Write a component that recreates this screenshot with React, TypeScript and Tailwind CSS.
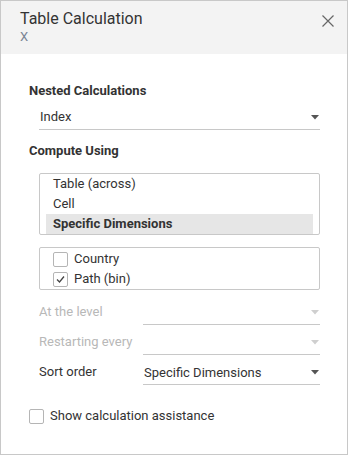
import React from 'react';

const font = "font-['Roboto','Noto_Sans',sans-serif]";

function Caret({ disabled }: { disabled?: boolean }) {
  return (
    <svg width="8" height="5" viewBox="0 0 8 5" className="mr-[1px]">
      <path d="M0 0 L8 0 L4 4.5 Z" fill={disabled ? '#cfcfcf' : '#555'} />
    </svg>
  );
}

function CheckBox({ checked }: { checked?: boolean }) {
  return (
    <span className="w-[15px] h-[15px] border border-[#b5b5b5] rounded-[2px] bg-white flex items-center justify-center shrink-0">
      {checked && (
        <svg width="11" height="11" viewBox="0 0 11 11">
          <path d="M2 5.5 L4.5 8 L9 2.5" fill="none" stroke="#444" strokeWidth="1.3" />
        </svg>
      )}
    </span>
  );
}

function FieldRow({ label, value, disabled }: { label: string; value?: string; disabled?: boolean }) {
  return (
    <div className="flex items-end h-[30px]">
      <div className={`w-[104px] pb-[4px] leading-[18px] text-[13px] ${disabled ? 'text-[#b8b8b8]' : 'text-[#333]'}`}>
        {label}
      </div>
      <div className="flex-1 flex items-center justify-between border-b border-[#c8c8c8] pb-[3px] h-[21px] leading-[18px] text-[13px] text-[#333]">
        <span className="pl-[1px]">{value ?? ''}</span>
        <Caret disabled={disabled} />
      </div>
    </div>
  );
}

export default function App() {
  return (
    <div className={`w-[348px] h-[455px] border border-[#c8c8c8] bg-white ${font}`}>
      <div className="h-[53px] bg-[#f3f3f3] pl-[19px] pr-[13px] pt-[8px] flex justify-between">
        <div>
          <div className="text-[16px] leading-[20px] text-[#333]">Table Calculation</div>
          <div className="text-[13px] leading-[15px] text-[#7a8594]">X</div>
        </div>
        <svg width="12" height="12" viewBox="0 0 12 12" className="mt-[6px]">
          <path d="M0.5 0.5 L11.5 11.5 M11.5 0.5 L0.5 11.5" stroke="#666" strokeWidth="1.2" />
        </svg>
      </div>

      <div className="pl-[28px] pr-[27px]">
        <div className="mt-[28px] text-[13px] leading-[18px] font-bold text-[#333]">Nested Calculations</div>
        <div className="ml-[10px] mt-[8px] flex items-center justify-between border-b border-[#c8c8c8] pb-[3px] leading-[18px] text-[13px] text-[#333]">
          <span className="pl-[1px]">Index</span>
          <Caret />
        </div>

        <div className="mt-[12px] text-[13px] leading-[18px] font-bold text-[#333]">Compute Using</div>

        <div className="ml-[10px] mt-[13px] border border-[#c8c8c8] rounded-[2px] text-[13px] text-[#333]">
          <div className="mx-[6px] h-[20px] pl-[7px] flex items-center">Table (across)</div>
          <div className="mx-[6px] h-[20px] pl-[7px] flex items-center">Cell</div>
          <div className="mx-[6px] h-[20px] pl-[7px] flex items-center bg-[#e6e6e6] font-bold">Specific Dimensions</div>
        </div>

        <div className="ml-[10px] mt-[12px] border border-[#c8c8c8] rounded-[2px] pt-[1px] text-[13px] text-[#333]">
          <div className="h-[20px] pl-[13px] flex items-center gap-[6px]">
            <CheckBox />
            <span>Country</span>
          </div>
          <div className="h-[20px] pl-[13px] flex items-center gap-[6px]">
            <CheckBox checked />
            <span>Path (bin)</span>
          </div>
        </div>

        <div className="ml-[10px] mt-[5px]">
          <FieldRow label="At the level" disabled />
          <FieldRow label="Restarting every" disabled />
          <FieldRow label="Sort order" value="Specific Dimensions" />
        </div>

        <div className="mt-[22px] flex items-center gap-[6px] text-[13px] leading-[18px] text-[#333]">
          <CheckBox />
          <span>Show calculation assistance</span>
        </div>
      </div>
    </div>
  );
}
